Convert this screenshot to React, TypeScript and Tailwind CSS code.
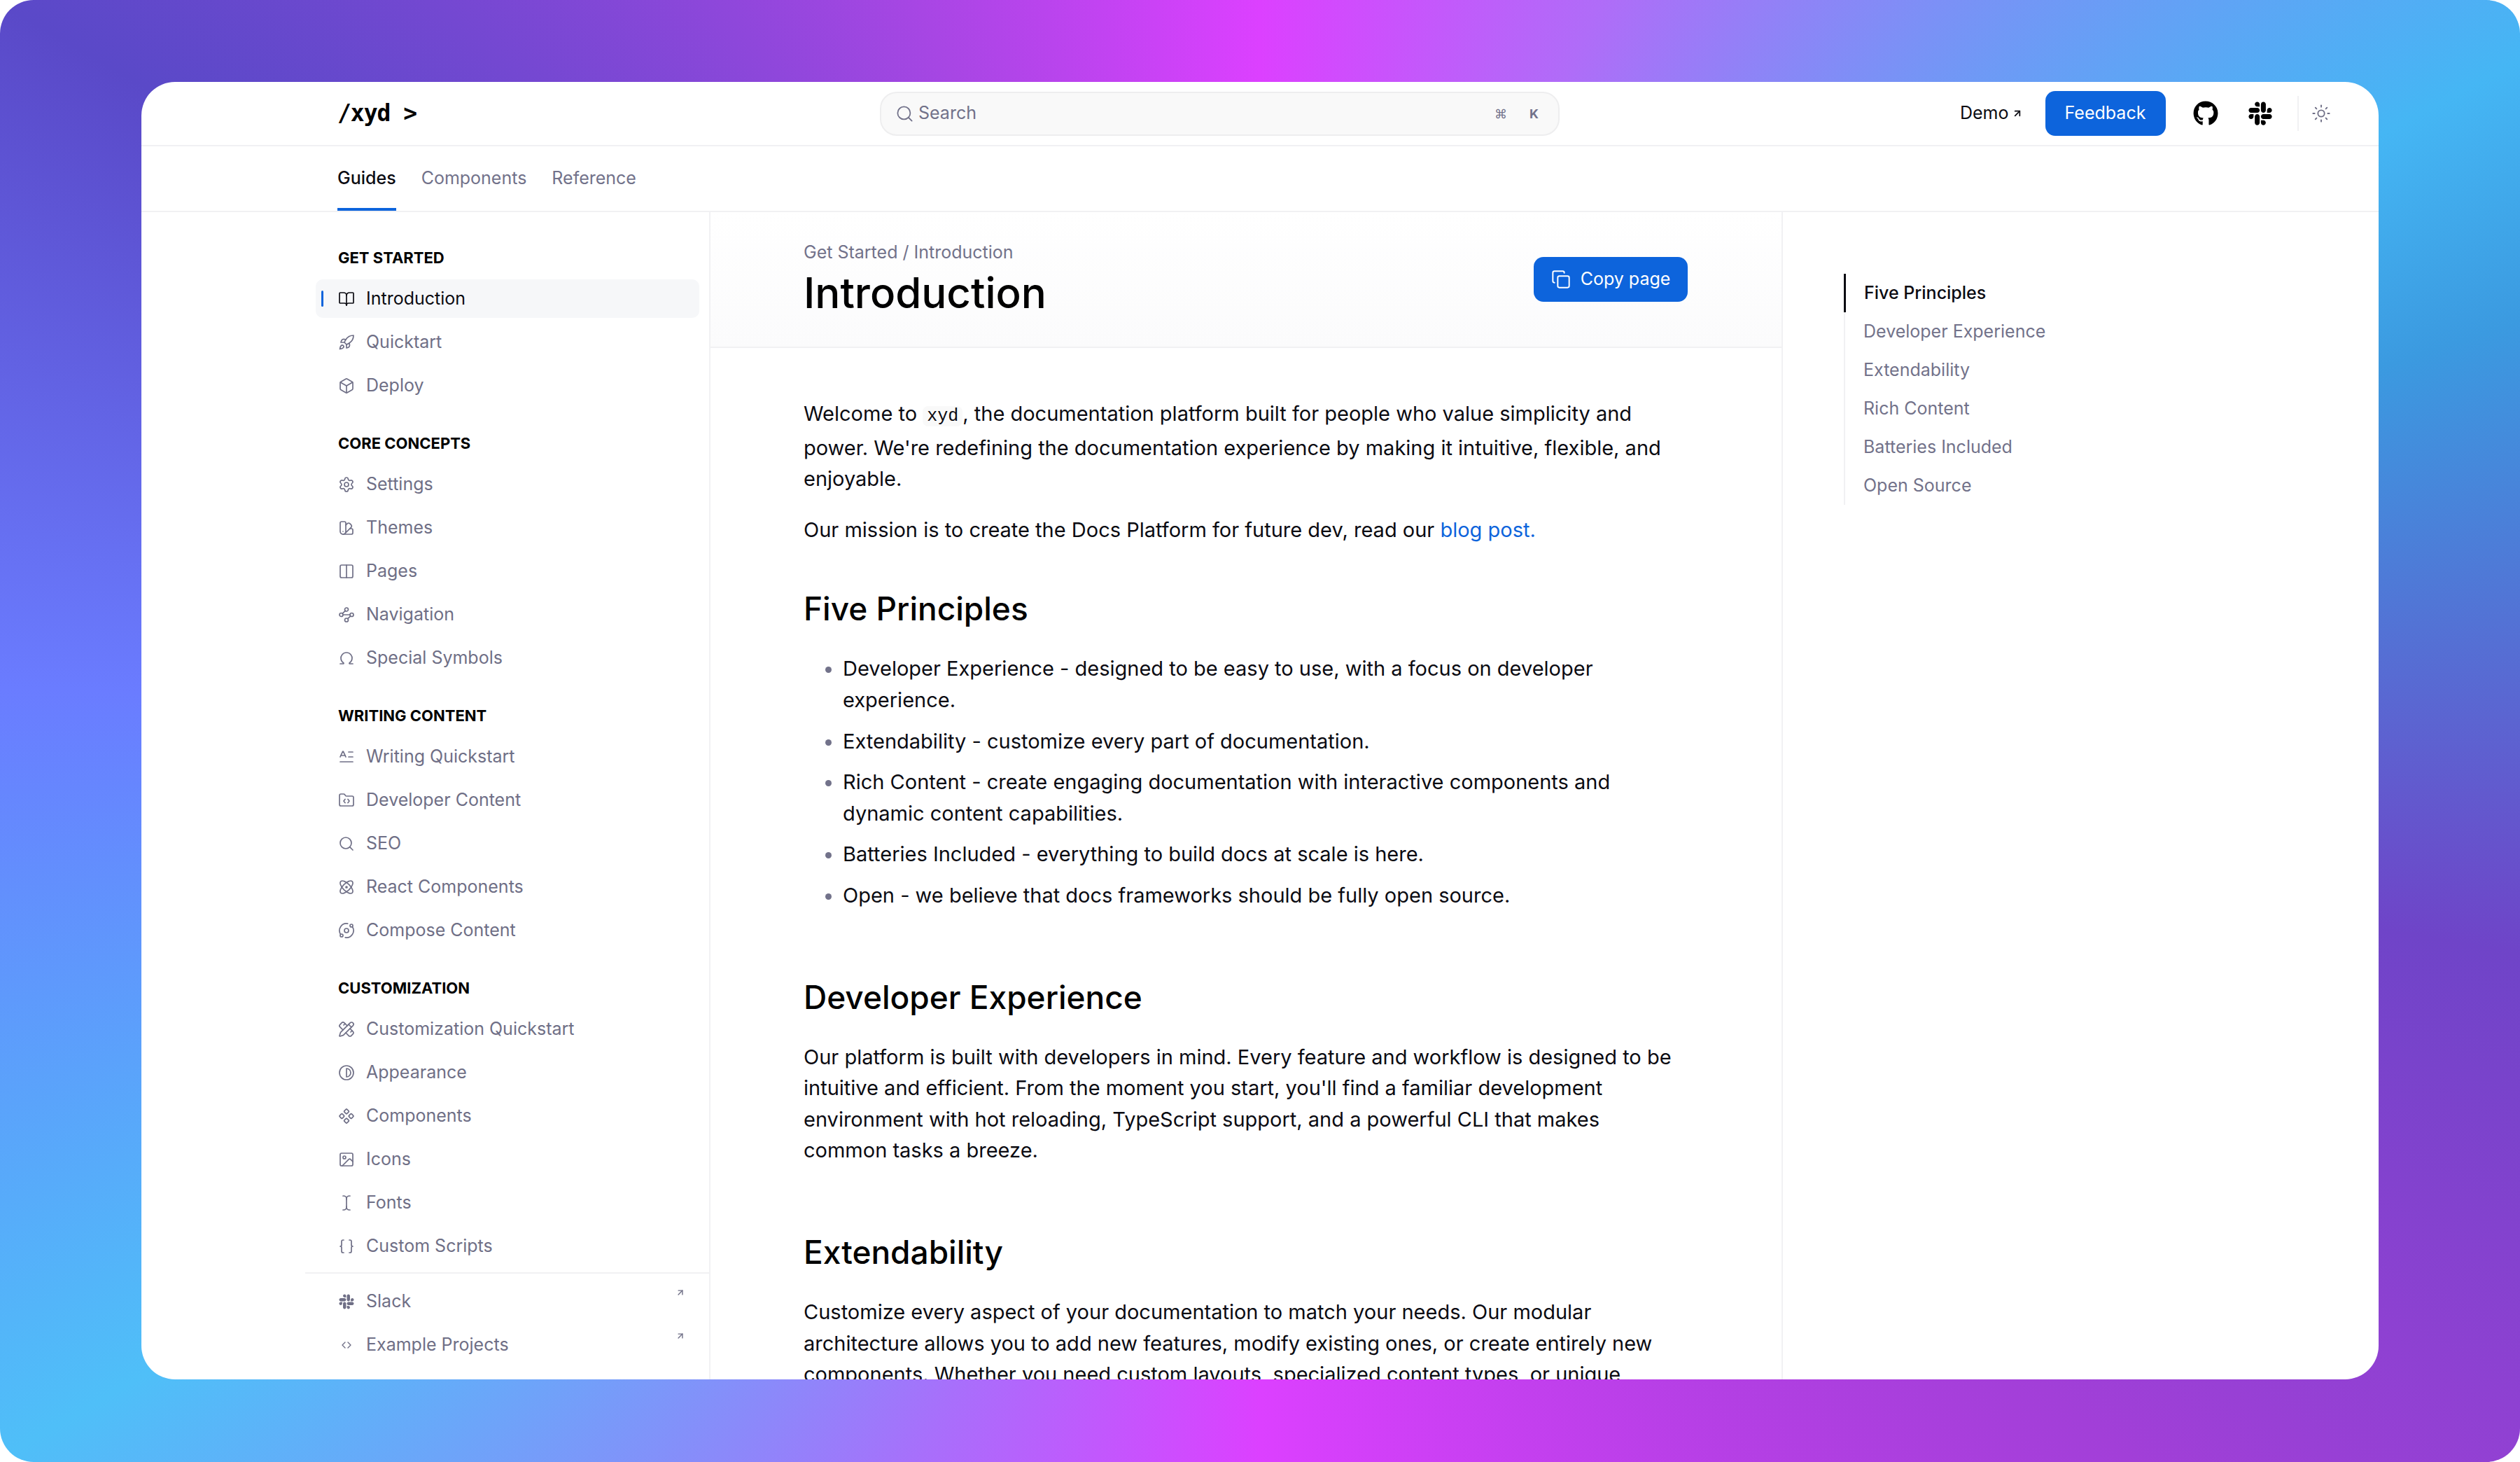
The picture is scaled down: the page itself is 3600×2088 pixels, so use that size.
import React from 'react';
import {
  ArrowUpRight,
  Atom,
  BookOpen,
  Box,
  Braces,
  ChevronLeft,
  ChevronRight,
  Columns2,
  Component,
  Contrast,
  Copy,
  FolderCode,
  Image,
  LetterText,
  Omega,
  Orbit,
  PencilRuler,
  Rocket,
  Search,
  Settings,
  Sun,
  SwatchBook,
  TextCursor,
  Waypoints,
} from 'lucide-react';
import { FaGithub, FaSlack } from 'react-icons/fa';

type Icon = React.ComponentType<{ className?: string; strokeWidth?: number }>;

const sections: { title: string; items: { label: string; icon: Icon; active?: boolean }[] }[] = [
  {
    title: 'GET STARTED',
    items: [
      { label: 'Introduction', icon: BookOpen, active: true },
      { label: 'Quicktart', icon: Rocket },
      { label: 'Deploy', icon: Box },
    ],
  },
  {
    title: 'CORE CONCEPTS',
    items: [
      { label: 'Settings', icon: Settings },
      { label: 'Themes', icon: SwatchBook },
      { label: 'Pages', icon: Columns2 },
      { label: 'Navigation', icon: Waypoints },
      { label: 'Special Symbols', icon: Omega },
    ],
  },
  {
    title: 'WRITING CONTENT',
    items: [
      { label: 'Writing Quickstart', icon: LetterText },
      { label: 'Developer Content', icon: FolderCode },
      { label: 'SEO', icon: Search },
      { label: 'React Components', icon: Atom },
      { label: 'Compose Content', icon: Orbit },
    ],
  },
  {
    title: 'CUSTOMIZATION',
    items: [
      { label: 'Customization Quickstart', icon: PencilRuler },
      { label: 'Appearance', icon: Contrast },
      { label: 'Components', icon: Component },
      { label: 'Icons', icon: Image },
      { label: 'Fonts', icon: TextCursor },
      { label: 'Custom Scripts', icon: Braces },
    ],
  },
];

const toc = ['Five Principles', 'Developer Experience', 'Extendability', 'Rich Content', 'Batteries Included', 'Open Source'];

const bullets = [
  'Developer Experience - designed to be easy to use, with a focus on developer experience.',
  'Extendability - customize every part of documentation.',
  'Rich Content - create engaging documentation with interactive components and dynamic content capabilities.',
  'Batteries Included - everything to build docs at scale is here.',
  'Open - we believe that docs frameworks should be fully open source.',
];

function SideRow({ label, icon: IconCmp, active }: { label: string; icon: Icon; active?: boolean }) {
  return (
    <div
      className={`relative flex h-[55px] items-center gap-[16px] rounded-[10px] pl-[32px] text-[25px] ${
        active ? 'bg-[#f6f7f9] text-[#0b0b12]' : 'text-[#6f6f86]'
      }`}
    >
      {active && <span className="absolute left-[8px] top-[16px] h-[23px] w-[3px] rounded-full bg-[#0d64dc]" />}
      <IconCmp className="size-[24px] shrink-0" strokeWidth={1.7} />
      <span>{label}</span>
    </div>
  );
}

function H2({ children, className }: { children: string; className: string }) {
  return <h2 className={`text-[46px] leading-[56px] font-medium text-black ${className}`}>{children}</h2>;
}

export default function App() {
  return (
    <div
      className="flex h-[2088px] w-[3600px] items-start overflow-hidden rounded-[48px] bg-[conic-gradient(from_0deg_at_50%_50%,#dc40ff_0deg,#b06cf8_25deg,#45b6f4_62deg,#3b9ae0_72deg,#6f44c8_100deg,#a23fd8_130deg,#dc40ff_180deg,#a86ffb_205deg,#4fbff8_240deg,#6a7cff_272deg,#5a49c8_300deg,#a846e4_335deg,#dc40ff_360deg)] pt-[117px] pl-[202px] font-['Inter',sans-serif]"
    >
      <div className="flex h-[1853px] w-[3196px] flex-col overflow-hidden rounded-[48px] bg-white">
        <header className="flex h-[92px] shrink-0 items-center border-b-2 border-[#f1f1f3] pl-[280px]">
          <div className="w-[775px] font-['DejaVu_Sans_Mono',monospace] text-[33px] font-bold tracking-[-1px] text-black">
            /xyd &gt;
          </div>
          <div className="flex h-[63px] w-[971px] items-center rounded-[24px] border-2 border-[#eeeeef] bg-[#f9f9f9] pr-[28px] pl-[20px] text-[25px] text-[#72728a]">
            <Search className="size-[27px]" strokeWidth={1.6} />
            <span className="ml-[6px] flex-1">Search</span>
            <span className="text-[18px]">⌘</span>
            <span className="ml-[32px] text-[18px] font-bold">K</span>
          </div>
          <div className="ml-[572px] flex items-center text-[25px] text-[#0b0b12]">
            <span>Demo</span>
            <ArrowUpRight className="ml-[4px] size-[16px]" strokeWidth={2.6} />
          </div>
          <button className="ml-[32px] flex h-[64px] w-[172px] items-center justify-center rounded-[14px] bg-[#0d64dc] text-[25px] text-white">
            Feedback
          </button>
          <FaGithub className="ml-[39px] size-[36px] text-black" />
          <FaSlack className="ml-[41px] size-[38px] text-black" />
          <div className="ml-[34px] h-[50px] w-[2px] bg-[#f1f1f3]" />
          <Sun className="ml-[18px] size-[28px] text-[#6f6f86]" strokeWidth={1.6} />
        </header>

        <nav className="flex h-[94px] shrink-0 items-stretch gap-[36px] border-b-2 border-[#f1f1f3] pl-[280px] text-[25px]">
          <div className="flex items-center border-b-4 border-[#0d64dc] pt-[4px] font-medium text-[#0b0b12]">Guides</div>
          <div className="flex items-center pb-[0px] text-[#72728a]">Components</div>
          <div className="flex items-center text-[#72728a]">Reference</div>
        </nav>

        <div className="flex min-h-0 flex-1">
          <aside className="flex w-[813px] shrink-0 flex-col border-r-2 border-[#f1f1f3] pl-[234px]">
            <div className="min-h-0 flex-1 overflow-hidden pt-[50px] pr-[14px] pl-[15px]">
              {sections.map((s) => (
                <div key={s.title} className="mb-[40px]">
                  <div className="mb-[16px] pl-[32px] text-[22px] leading-[30px] font-bold text-black">{s.title}</div>
                  <div className="flex flex-col gap-[7px]">
                    {s.items.map((item) => (
                      <SideRow key={item.label} {...item} />
                    ))}
                  </div>
                </div>
              ))}
            </div>
            <div className="flex h-[153px] shrink-0 flex-col gap-[7px] border-t-2 border-[#f1f1f3] pt-[12px] pr-[14px] pl-[15px]">
              <div className="relative flex h-[55px] items-center gap-[16px] pl-[32px] text-[25px] text-[#6f6f86]">
                <FaSlack className="size-[24px]" />
                <span>Slack</span>
                <ArrowUpRight className="absolute top-[8px] right-[20px] size-[14px]" strokeWidth={2.4} />
              </div>
              <div className="relative flex h-[55px] items-center gap-[16px] pl-[32px] text-[25px] text-[#6f6f86]">
                <span className="flex w-[24px] shrink-0 justify-center">
                  <ChevronLeft className="-mr-[4px] size-[16px]" strokeWidth={2} />
                  <ChevronRight className="-ml-[4px] size-[16px]" strokeWidth={2} />
                </span>
                <span>Example Projects</span>
                <ArrowUpRight className="absolute top-[8px] right-[20px] size-[14px]" strokeWidth={2.4} />
              </div>
            </div>
          </aside>

          <main className="w-[1532px] shrink-0 border-r-2 border-[#f1f1f3]">
            <div className="flex h-[194px] items-center border-b-2 border-[#f1f1f3] bg-gradient-to-b from-white to-[#fbfbfc] pr-[134px] pl-[133px]">
              <div className="flex-1">
                <div className="text-[25px] leading-[32px] text-[#72728a]">Get Started / Introduction</div>
                <h1 className="mt-[6px] text-[60px] leading-[72px] font-medium text-black">Introduction</h1>
              </div>
              <button className="flex h-[64px] w-[220px] items-center justify-center gap-[14px] rounded-[14px] bg-[#0d64dc] text-[25px] text-white">
                <Copy className="size-[28px]" strokeWidth={1.7} />
                Copy page
              </button>
            </div>

            <article className="pt-[72px] pr-[134px] pl-[133px] text-[29px] leading-[44.6px] text-[#0b0b12]">
              <p>
                Welcome to{' '}
                <code className="rounded-[8px] bg-[#f9f9f9] px-[6px] font-['Liberation_Mono',monospace] text-[25px]">xyd</code>
                , the documentation platform built for people who value simplicity and power. We&apos;re redefining the
                documentation experience by making it intuitive, flexible, and enjoyable.
              </p>
              <p className="mt-[28px]">
                Our mission is to create the Docs Platform for future dev, read our{' '}
                <a className="text-[#0d64dc]">blog post.</a>
              </p>

              <H2 className="mt-[62px]">Five Principles</H2>
              <ul className="mt-[36px] flex list-disc flex-col gap-[14px] pl-[56px] marker:text-[#72728a]">
                {bullets.map((b) => (
                  <li key={b}>{b}</li>
                ))}
              </ul>

              <H2 className="mt-[94px]">Developer Experience</H2>
              <p className="mt-[36px]">
                Our platform is built with developers in mind. Every feature and workflow is designed to be intuitive and
                efficient. From the moment you start, you&apos;ll find a familiar development environment with hot reloading,
                TypeScript support, and a powerful CLI that makes common tasks a breeze.
              </p>

              <H2 className="mt-[94px]">Extendability</H2>
              <p className="mt-[36px]">
                Customize every aspect of your documentation to match your needs. Our modular architecture allows you to add
                new features, modify existing ones, or create entirely new components. Whether you need custom layouts,
                specialized content types, or unique integrations, our architecture makes it possible.
              </p>
            </article>
          </main>

          <aside className="pt-[88px] pl-[87px]">
            <div className="flex flex-col border-l-2 border-[#f1f1f3] text-[25px] text-[#72728a]">
              {toc.map((t, i) => (
                <div
                  key={t}
                  className={`flex h-[55px] items-center pl-[26px] ${
                    i === 0 ? '-ml-[2px] border-l-[3px] border-[#0b0b12] font-medium text-[#0b0b12]' : ''
                  }`}
                >
                  {t}
                </div>
              ))}
            </div>
          </aside>
        </div>
      </div>
    </div>
  );
}
